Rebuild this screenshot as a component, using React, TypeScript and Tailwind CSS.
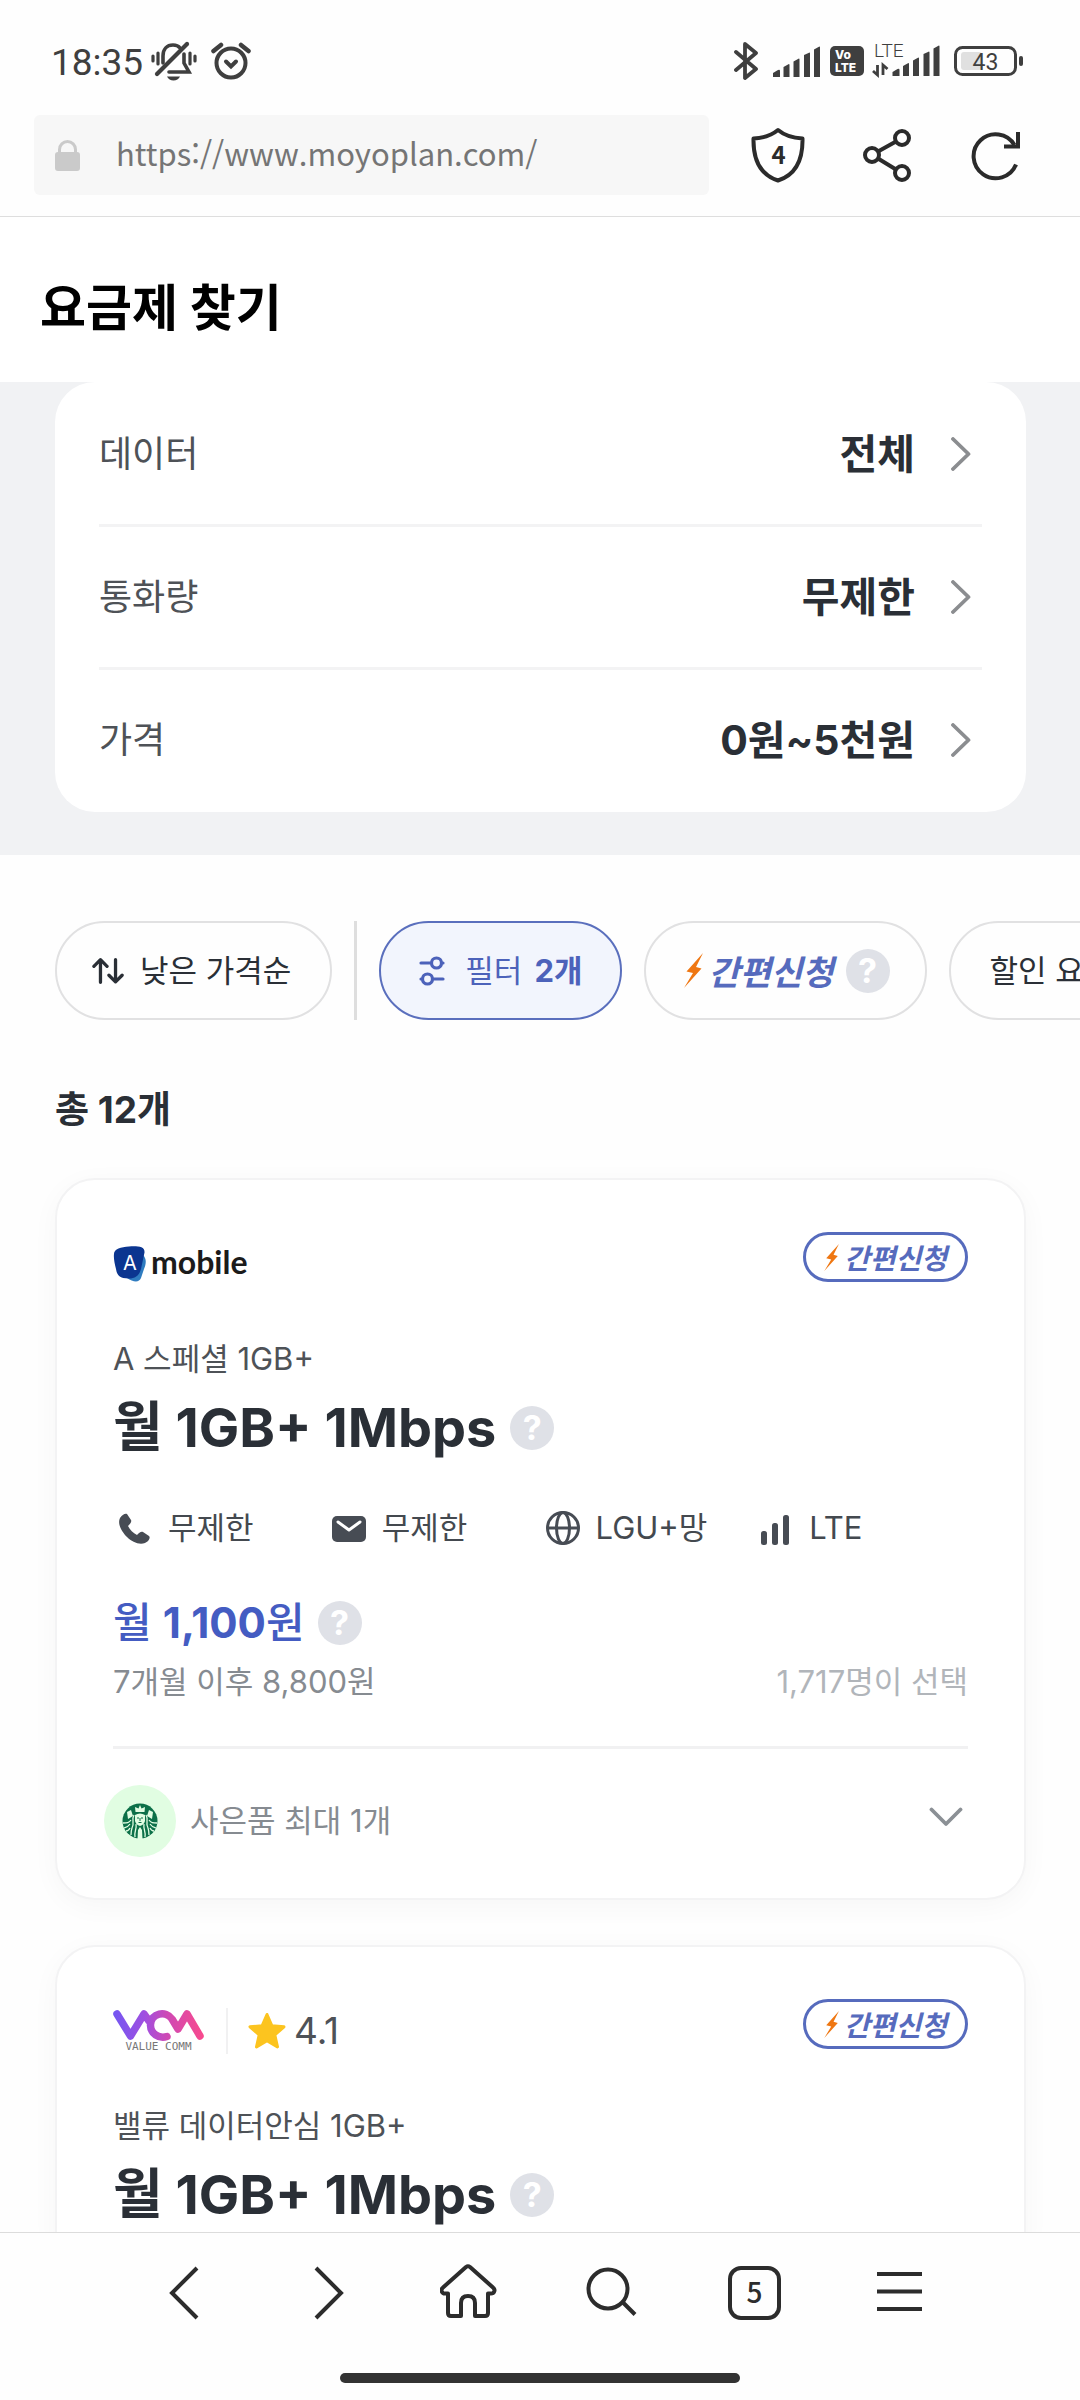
import type { ReactNode } from "react";

const KR = "font-['Noto_Sans_CJK_KR',sans-serif]";

function SignalBars() {
  return (
    <g fill="#3f3f3f">
      <path d="M0 31v-4l5-3q2-1 2 1v6z" />
      <path d="M10.500 31V21l4.500-2.500q1.500-1 1.500.5V31z" />
      <path d="M20.500 31V15.500l4.500-2.500q1.500-1 1.500.5V31z" />
      <path d="M31 31V9l4.500-2q1.500-1 1.500.5V31z" />
      <path d="M41 31V3.500l4.500-2.500q1.500-1 1.500.5V31z" />
    </g>
  );
}

function StatusBar() {
  return (
    <div className="flex items-center justify-between pt-10 pr-14 pb-[33px] pl-[51px]">
      <div className="flex h-[42px] items-center">
        <span className="mt-1 font-['Roboto',sans-serif] text-[37px] leading-[42px] text-[#3f3f3f]">18:35</span>
        <svg className="ml-2" width="46" height="40" viewBox="0 0 46 40" fill="none" stroke="#3f3f3f" strokeWidth="3.600" strokeLinecap="round" aria-label="무음">
          <path d="M2 15v5M7 12v11M39 12v11M44 15v5" strokeWidth="3.200" />
          <path d="M12 22v-7c0-7 4-11 10-11 3 0 5.500 1 7 3" />
          <path d="M33 13v9l5 9H18" />
          <path d="M6 33L36 3" strokeWidth="4.200" />
          <path d="M16 35.500h13q-2 4-6.500 4t-6.500-4z" fill="#3f3f3f" stroke="none" />
        </svg>
        <svg className="ml-3.5" width="40" height="38" viewBox="0 0 40 38" fill="none" stroke="#3f3f3f" strokeWidth="4" strokeLinecap="round" aria-label="알람">
          <circle cx="20" cy="21" r="14.500" />
          <path d="M2.500 9L10 3M37.500 9L30 3" strokeWidth="4.500" />
          <path d="M15 19.500l5 5 5-5" />
        </svg>
      </div>
      <div className="flex h-[42px] items-center">
        <svg width="25" height="40" viewBox="0 0 25 40" fill="none" stroke="#3f3f3f" strokeWidth="3.800" strokeLinejoin="round" strokeLinecap="round" aria-label="블루투스">
          <path d="M2 11l20 17-11 9V3l11 9L2 29" />
        </svg>
        <svg className="ml-3.5" width="47" height="31" viewBox="0 0 47 31" aria-label="신호">
          <SignalBars />
        </svg>
        <svg className="ml-2.5" width="34" height="30" viewBox="0 0 34 30" aria-label="VoLTE">
          <rect width="34" height="30" rx="5" fill="#3f3f3f" />
          <text x="5" y="13" fontSize="12" fontWeight="800" fill="#fff" fontFamily="Inter">Vo</text>
          <text x="5" y="26" fontSize="12" fontWeight="800" fill="#fff" fontFamily="Inter">LTE</text>
        </svg>
        <svg className="ml-2" width="68" height="48" viewBox="0 0 68 48" aria-label="LTE">
          <text x="2" y="20" fontSize="19" fontWeight="300" fill="#3f3f3f" fontFamily="Roboto">LTE</text>
          <path d="M5.500 28v10L1 34M11 38V28l4.500 4" fill="none" stroke="#3f3f3f" strokeWidth="2.800" />
          <g transform="translate(20.500 8)">
            <SignalBars />
          </g>
        </svg>
        <svg className="ml-3.5" width="70" height="31" viewBox="0 0 70 31" aria-label="배터리">
          <rect x="1.500" y="1.500" width="60" height="27" rx="7" fill="none" stroke="#3f3f3f" strokeWidth="3" />
          <rect x="7" y="6" width="21" height="18" rx="3" fill="#e0e0e0" />
          <text x="31.500" y="23.500" fontSize="23" textAnchor="middle" fill="#3f3f3f" fontFamily="Roboto">43</text>
          <rect x="65" y="10" width="4" height="10" rx="2" fill="#3f3f3f" />
        </svg>
      </div>
    </div>
  );
}

function AddressBar() {
  return (
    <div className="flex items-center border-b border-[#dedede] pr-[57px] pb-[21px] pl-[34px]">
      <label className="flex h-20 min-w-0 flex-1 items-center rounded-md bg-[#f7f7f7] pl-[21px]">
        <svg width="25" height="31" viewBox="0 0 25 31" aria-hidden="true">
          <rect y="12" width="25" height="19" rx="3" fill="#cacaca" />
          <path d="M4.500 14V9.500a8 8 0 0 1 16 0V14" fill="none" stroke="#cacaca" strokeWidth="3" />
        </svg>
        <input
          aria-label="주소"
          defaultValue="https://www.moyoplan.com/"
          className={`mb-1 ml-9 min-w-0 flex-1 bg-transparent text-[31px] leading-[52px] text-[#757575] outline-none ${KR}`}
        />
      </label>
      <div className="ml-[42px] flex items-center gap-[55px]">
        <button aria-label="보호">
          <svg width="54" height="56" viewBox="0 0 54 56" fill="none">
            <path d="M27 3c6 5 15 8 24.500 8.500C52 34 44 48 27 53.500 10 48 2 34 2.500 11.500 12 11 21 8 27 3z" stroke="#2b2b2b" strokeWidth="4" strokeLinejoin="round" />
            <text x="27.500" y="37" fontSize="24" fontWeight="700" textAnchor="middle" fill="#2b2b2b" fontFamily="Noto Sans CJK KR">4</text>
          </svg>
        </button>
        <button aria-label="공유">
          <svg width="54" height="54" viewBox="0 0 54 54" fill="none" stroke="#2b2b2b" strokeWidth="4">
            <circle cx="12" cy="27" r="7" />
            <circle cx="42" cy="10" r="7" />
            <circle cx="42" cy="45" r="7" />
            <path d="M18 23.500l18-10M18 30.500l18 11" />
          </svg>
        </button>
        <button aria-label="새로고침">
          <svg width="54" height="54" viewBox="0 0 54 54" fill="none" stroke="#2b2b2b" strokeWidth="4">
            <path d="M47 36.500A22 22 0 1 1 45.500 17" />
            <path d="M49 4v14.500H35" />
          </svg>
        </button>
      </div>
    </div>
  );
}

function Help() {
  return (
    <button
      aria-label="도움말"
      className="flex size-11 shrink-0 items-center justify-center rounded-full bg-[#dfe1e7] text-[34px] leading-none font-bold text-white"
    >
      ?
    </button>
  );
}

function ConditionRow({ label, value }: { label: string; value: string }) {
  return (
    <button className="flex h-[143px] w-full items-center justify-between border-b-3 border-[#f3f3f4] last:h-[142px] last:border-transparent">
      <span className="text-4xl leading-[52px] text-[#4e5257]">{label}</span>
      <span className="flex items-center gap-9 pr-[11px] text-[41px] leading-[56px] font-bold text-[#2a2f36]">
        {value}
        <svg width="20" height="34" viewBox="0 0 20 34" fill="none" stroke="#8b8d90" strokeWidth="3.800" strokeLinecap="round" strokeLinejoin="round" aria-hidden="true">
          <path d="M2 2l15.500 15L2 32" />
        </svg>
      </span>
    </button>
  );
}

function Bolt({ className }: { className: string }) {
  return (
    <svg className={className} viewBox="0 0 20 35" aria-hidden="true">
      <path d="M19 0L2.500 18.500 9 20 0 35 17.500 15.500 12 14z" fill="#ef7712" />
    </svg>
  );
}

function Chip({ children, active = false }: { children: ReactNode; active?: boolean }) {
  return (
    <button
      className={
        active
          ? "flex h-[99px] shrink-0 items-center rounded-full border-2 border-[#5a6fbd] bg-[#f2f5fd] px-[38px] text-[31px] leading-11 text-[#4c62ba]"
          : "flex h-[99px] shrink-0 items-center rounded-full border-2 border-[#e1e1e2] px-[35px] text-[31px] leading-11 text-[#2a2f36]"
      }
    >
      {children}
    </button>
  );
}

function Chips() {
  return (
    <div className="flex gap-[22px] overflow-hidden pl-[55px]">
      <Chip>
        <svg width="32" height="28" viewBox="0 0 34 28" fill="none" stroke="#2a2f36" strokeWidth="3.500" strokeLinecap="round" strokeLinejoin="round" aria-hidden="true">
          <path d="M9 26V2.500M2 9l7-7 7 7M25 2v23M18 18.500l7 7 7-7" />
        </svg>
        <span className="mr-1 ml-4">낮은 가격순</span>
      </Chip>
      <div className="w-[3px] shrink-0 bg-[#dedede]" />
      <Chip active>
        <svg width="26" height="30" viewBox="0 0 26 30" fill="none" stroke="#4c62ba" strokeWidth="3.200" strokeLinecap="round" aria-hidden="true">
          <circle cx="17.500" cy="7" r="5" />
          <path d="M2 7h10M23 7h1" />
          <circle cx="8.500" cy="23" r="5" />
          <path d="M14 23h10M2 23h1" />
        </svg>
        <span className="ml-5">필터</span>
        <span className="ml-3 font-bold">2개</span>
      </Chip>
      <Chip>
        <Bolt className="ml-[3px] h-[35px] w-[20px]" />
        <span className={`ml-1 text-[34px] font-bold text-[#566bbd] italic ${KR}`}>간편신청</span>
        <span className="ml-3 flex">
          <Help />
        </span>
      </Chip>
      <Chip>
        <span className="ml-1">할인 요금제</span>
      </Chip>
    </div>
  );
}

function EasyBadge() {
  return (
    <span className="flex h-[50px] w-[165px] items-center rounded-full border-3 border-[#566bbd] pl-[18px]">
      <Bolt className="h-[27px] w-4" />
      <span className={`ml-1 text-[28px] leading-10 font-bold text-[#566bbd] italic ${KR}`}>간편신청</span>
    </span>
  );
}

function AMobileLogo() {
  return (
    <span className="flex items-center gap-[5px]">
      <svg width="33" height="36" viewBox="0 0 33 36" aria-hidden="true">
        <path d="M14 32L30 9c4 4 3 9 1 14l-3 9c-2 5-8 4-14 0z" fill="#2f7cc0" />
        <path d="M1 8C1 3 8 1 16 .5c9-.5 16 0 15.500 6L28 23c-2 7-6 9.500-12 9.500C6 32.500 4 29 3 23 1.500 17 .5 12 1 8z" fill="#0b3590" />
        <text x="17" y="24" fontSize="20" textAnchor="middle" fill="#fff" fontFamily="Inter">A</text>
      </svg>
      <span className="mb-1 font-['Lato',sans-serif] text-[32px] leading-9 font-bold text-[#1b1b1b]">mobile</span>
    </span>
  );
}

function ValueCommLogo() {
  return (
    <span className="flex w-[91px] flex-col items-center">
      <svg width="91" height="32" viewBox="0 0 91 32" fill="none" aria-label="VCM">
        <defs>
          <linearGradient id="vcm" gradientUnits="userSpaceOnUse" x1="0" y1="0" x2="91" y2="0">
            <stop offset="0" stopColor="#7357f2" />
            <stop offset="0.350" stopColor="#a04fe0" />
            <stop offset="0.600" stopColor="#cf49b4" />
            <stop offset="1" stopColor="#f94a8c" />
          </linearGradient>
        </defs>
        <path
          d="M4 5l13.500 22L31 5l5 7M54 27.500c-8 2.500-17-3-16.500-12C38 4 53 1 59 10l6 10 9-15 13 22"
          stroke="url(#vcm)"
          strokeWidth="7.500"
          strokeLinecap="round"
          strokeLinejoin="round"
        />
      </svg>
      <span className="font-['DejaVu_Sans_Mono',monospace] text-[11px] leading-3 text-[#777]">VALUE COMM</span>
    </span>
  );
}

function Rating({ score }: { score: string }) {
  return (
    <span className="ml-[22px] flex items-center border-l-2 border-[#f1f1f2] pl-5">
      <svg width="38" height="38" viewBox="0 0 38 38" aria-hidden="true">
        <path
          d="M19 2.500l4.800 11.200 12.200 1.100-9.200 8.100 2.700 12L19 28.600 8.500 34.900l2.700-12L2 14.800l12.200-1.100z"
          fill="#fcc41f"
          stroke="#fcc41f"
          strokeWidth="3"
          strokeLinejoin="round"
        />
      </svg>
      <span className="ml-2 text-[37px] leading-[46px] text-[#4e5257]">{score}</span>
    </span>
  );
}

function CardTop({ logo, name, title }: { logo: ReactNode; name: string; title: string }) {
  return (
    <>
      <div className="flex h-[57px] items-start justify-between">
        <div className="flex h-[50px] items-center self-end">{logo}</div>
        <EasyBadge />
      </div>
      <p className="mt-12 text-[31px] leading-11 text-[#4e5257]">{name}</p>
      <div className="mt-[11px] flex items-center gap-3.5">
        <h2 className="text-[54px] leading-[72px] font-bold text-[#2a2f36]">{title}</h2>
        <Help />
      </div>
    </>
  );
}

function Spec({ icon, children }: { icon: ReactNode; children: ReactNode }) {
  return (
    <li className="flex items-center gap-[11px] whitespace-nowrap">
      <svg width="44" height="44" viewBox="0 0 44 44" fill="none" aria-hidden="true">
        {icon}
      </svg>
      {children}
    </li>
  );
}

const cardClass =
  "rounded-[40px] border-2 border-[#f3f3f4] bg-white px-14 pt-[52px] pb-[41px] shadow-[0_6px_28px_rgba(0,0,0,0.035)]";

function FirstPlan() {
  return (
    <article className={cardClass}>
      <CardTop logo={<AMobileLogo />} name="A 스페셜 1GB+" title="월 1GB+ 1Mbps" />
      <ul className="mt-[42px] grid grid-cols-4 text-[31px] leading-11 text-[#44494f]">
        <Spec
          icon={
            <path
              d="M7 12c2-3 5-5 7-4l4 6c1 2-1 4-3 6 2 4 5 7 9 9 2-2 4-4 6-3l6 4c2 2-1 6-4 7-6 2-13-1-18-6S4 18 7 12z"
              fill="#474c54"
            />
          }
        >
          무제한
        </Spec>
        <Spec
          icon={
            <>
              <rect x="5" y="10" width="34" height="26" rx="5" fill="#474c54" />
              <path d="M11 16l11 8 11-8" stroke="#fff" strokeWidth="3" strokeLinecap="round" strokeLinejoin="round" />
            </>
          }
        >
          무제한
        </Spec>
        <Spec
          icon={
            <g stroke="#474c54" strokeWidth="3">
              <circle cx="22" cy="22" r="15.500" />
              <ellipse cx="22" cy="22" rx="6.500" ry="15.500" />
              <path d="M6.500 22h31" />
            </g>
          }
        >
          LGU+망
        </Spec>
        <Spec
          icon={
            <g fill="#474c54">
              <rect x="7" y="25" width="6" height="14" rx="2.500" />
              <rect x="18" y="17" width="6" height="22" rx="2.500" />
              <rect x="29" y="9" width="6" height="30" rx="2.500" />
            </g>
          }
        >
          LTE
        </Spec>
      </ul>
      <div className="mt-[45px] flex h-14 items-center gap-[13px]">
        <p className="text-[42px] leading-[56px] text-[#445cc2]">
          <span className="font-medium">월 </span>
          <span className="font-bold">1,100</span>
          <span className="font-medium">원</span>
        </p>
        <Help />
      </div>
      <div className="mt-[9px] flex justify-between text-[31px] leading-11">
        <span className="text-[#868b91]">7개월 이후 8,800원</span>
        <span className="text-[#b1b5ba]">1,717명이 선택</span>
      </div>
      <button className="mt-[42px] flex w-full items-center border-t-3 border-[#f1f1f2] pt-9">
        <span className="-ml-[9px] flex size-[72px] items-center justify-center rounded-full bg-[#e1fde2]">
          <svg width="36" height="36" viewBox="0 0 36 36" fill="none" aria-label="스타벅스">
            <circle cx="18" cy="18" r="17.500" fill="#0c7048" />
            <path d="M18 2l1.500 3.500L23 4l-.5 5h-9L13 4l3.500 1.500z" fill="#e1fde2" />
            <path d="M5 9l4-2 2 6-5 3zM31 9l-4-2-2 6 5 3z" fill="#e1fde2" />
            <path d="M13 12q5-3 10 0v6q-1 4-5 5-4-1-5-5z" fill="#e1fde2" />
            <path d="M15 15h2M19 15h2M16.500 19.500h3M18 15v3" stroke="#0c7048" strokeWidth="1" />
            <path
              d="M12 12c-3 5 1 8-2 13-1 3-1 5-1 7M24 12c3 5-1 8 2 13 1 3 1 5 1 7M14 21c1 5-2 7-1 13M22 21c-1 5 2 7 1 13M9 17c-2 3-4 3-8 3M27 17c2 3 4 3 8 3M8 21c-2 3-3 3-6 4M28 21c2 3 3 3 6 4M8 25c-1 2-2 3-4 3M28 25c1 2 2 3 4 3"
              stroke="#e1fde2"
              strokeWidth="1.300"
            />
            <path d="M16 27l2-3 2 3 .5 9h-5z" fill="#e1fde2" />
          </svg>
        </span>
        <span className="ml-3.5 flex-1 text-left text-[31px] leading-11 text-[#868b91]">사은품 최대 1개</span>
        <svg className="mr-[5px] mb-2" width="34" height="20" viewBox="0 0 34 20" fill="none" stroke="#8b9095" strokeWidth="3.800" strokeLinecap="round" strokeLinejoin="round" aria-hidden="true">
          <path d="M2.500 2.500L17 17 31.500 2.500" />
        </svg>
      </button>
    </article>
  );
}

function NavButton({ label, children }: { label: string; children: ReactNode }) {
  return (
    <button aria-label={label} className="flex flex-1 justify-center">
      <svg width="60" height="60" viewBox="0 0 60 60" fill="none" stroke="#2c2c2c" strokeWidth="4">
        {children}
      </svg>
    </button>
  );
}

function BottomBar() {
  return (
    <footer className="border-t border-[#dcdcdc] bg-[#fefefe]">
      <nav className="flex pt-[30px] pr-[110px] pl-[112px]">
        <NavButton label="뒤로">
          <path d="M43 5L18 30l25 25" />
        </NavButton>
        <NavButton label="앞으로">
          <path d="M19 5l25 25-25 25" />
        </NavButton>
        <NavButton label="홈">
          <path
            d="M26 4Q28 2.500 30 4L53 24.500c3 2.500 1 6-2 6h-3V50q0 3-3 3H35V40q0-7-7-7t-7 7v13H11q-3 0-3-3V30.500H5c-3 0-5-3.500-2-6z"
            strokeLinejoin="round"
          />
        </NavButton>
        <NavButton label="검색">
          <circle cx="25" cy="26" r="19.500" />
          <path d="M39 38.500l13 13" />
        </NavButton>
        <NavButton label="탭">
          <rect x="4" y="5" width="49" height="50" rx="11" />
          <text x="28.500" y="40" fontSize="28" fontWeight="500" textAnchor="middle" fill="#2c2c2c" stroke="none" fontFamily="Noto Sans CJK KR">5</text>
        </NavButton>
        <NavButton label="메뉴">
          <path d="M8 11h45M8 28.500h45M8 46h45" />
        </NavButton>
      </nav>
      <div className="mx-auto mt-[50px] mb-[17px] h-2.5 w-[37%] rounded-full bg-[#333]" />
    </footer>
  );
}

export default function App() {
  return (
    <div className="flex h-screen flex-col overflow-hidden bg-[#fefefe] font-['Inter','Noto_Sans_CJK_KR',sans-serif]" lang="ko">
      <StatusBar />
      <AddressBar />
      <h1 className="bg-white pt-[54px] pb-[37px] pl-10 text-[50px] leading-[74px] font-bold text-black">요금제 찾기</h1>
      <main className="min-h-0 flex-1 overflow-y-auto [scrollbar-width:none]">
        <section className="bg-[#f1f2f4] pr-[54px] pb-[43px] pl-[55px]">
          <div className="rounded-[40px] bg-white px-11 pt-0.5">
            <ConditionRow label="데이터" value="전체" />
            <ConditionRow label="통화량" value="무제한" />
            <ConditionRow label="가격" value="0원~5천원" />
          </div>
        </section>
        <section className="pt-[66px]">
          <Chips />
          <p className="mt-[65px] px-[55px] text-[37px] leading-[50px] font-bold text-[#2a2f36]">총 12개</p>
          <div className="mt-[43px] flex flex-col gap-[45px] pr-[54px] pl-[55px]">
            <FirstPlan />
            <article className={cardClass}>
              <CardTop
                logo={
                  <>
                    <ValueCommLogo />
                    <Rating score="4.1" />
                  </>
                }
                name="밸류 데이터안심 1GB+"
                title="월 1GB+ 1Mbps"
              />
            </article>
          </div>
        </section>
      </main>
      <BottomBar />
    </div>
  );
}
